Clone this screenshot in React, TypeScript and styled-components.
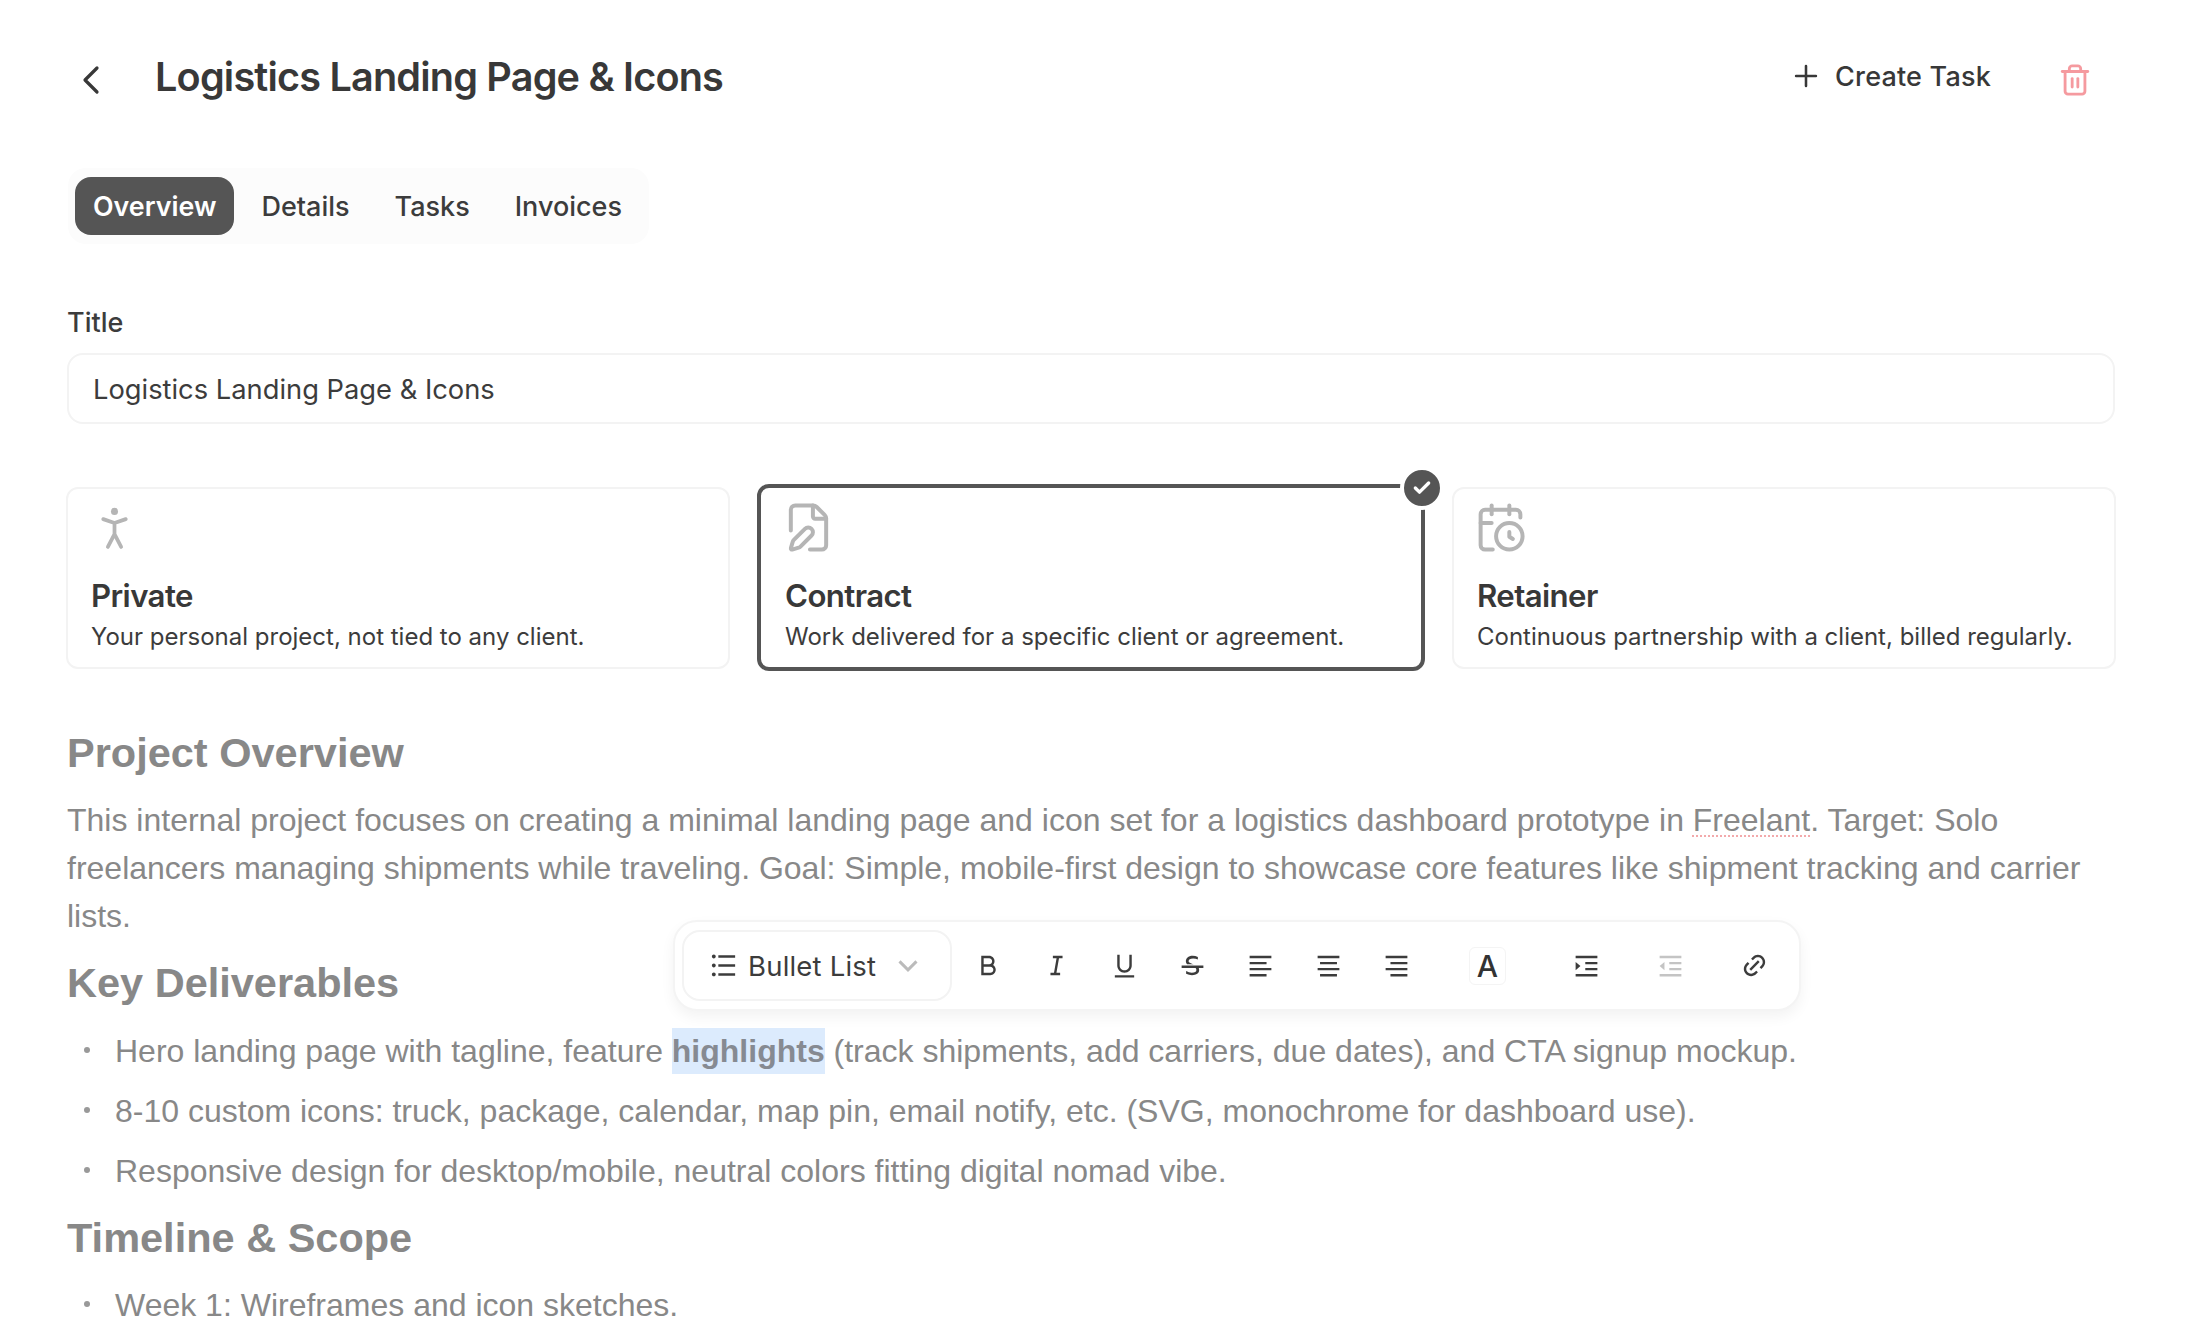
import React from "react";
import styled, { createGlobalStyle } from "styled-components";
import { ChevronLeft, Plus, Trash2, FilePen, CalendarClock, Check } from "lucide-react";
import {
  RiListUnordered, RiArrowDownSLine, RiBold, RiItalic, RiUnderline, RiStrikethrough,
  RiAlignLeft, RiAlignCenter, RiAlignRight, RiIndentIncrease, RiIndentDecrease, RiLinkM,
} from "react-icons/ri";

const Global = createGlobalStyle`
  html, body { margin: 0; padding: 0; background: #fff; height: 100%; overflow: hidden; }
  body { font-family: Inter, "Liberation Sans", sans-serif; color: #333; }
`;
const Page = styled.div`
  width: 2190px; height: 1318px; overflow: hidden; box-sizing: border-box; padding: 0 74px 0 66px; position: relative;
`;
const Header = styled.header`
  display: flex; align-items: center; height: 156px; padding: 0 24px 0 1px;
`;
const BackBtn = styled.span`display: flex; width: 88px; margin-top: 4px; color: #383838;`;
const PageTitle = styled.h1`
  margin: 0 0 2px; flex: 1; font-size: 39.6px; font-weight: 600; letter-spacing: -0.8px; color: #383838;
`;
const CreateBtn = styled.span`
  display: flex; align-items: center; gap: 12px; font-size: 27px; font-weight: 500; color: #383838; margin: 0 67px 4px 0; letter-spacing: 0.2px;
`;
const TrashBtn = styled.span`display: flex; margin-top: 4px; color: #f59a9f;`;
const Tabs = styled.nav`
  display: inline-flex; align-items: center; height: 76px; padding: 0 0 0 7px; margin: 12px 0 0 2px; background: #fcfcfc; border-radius: 18px;
`;
const Tab = styled.span<{ $active?: boolean }>`
  display: flex; align-items: center; height: 58px; padding: 0 18px; margin-right: 9px; border-radius: 16px;
  font-size: ${(p) => (p.$active ? "26.8px" : "27px")}; font-weight: ${(p) => (p.$active ? 600 : 500)};
  color: ${(p) => (p.$active ? "#fff" : "#3c3c3c")}; background: ${(p) => (p.$active ? "#555" : "transparent")};
`;
const Label = styled.div`font-size: 27px; font-weight: 500; color: #3c3c3c; margin: 62px 0 13px 1px; line-height: 34px;`;
const Input = styled.div`
  box-sizing: border-box; height: 71px; margin-left: 1px; width: 2048px; border: 2px solid #f3f3f3; border-radius: 16px; padding: 1px 24px 0; display: flex; align-items: center;
  font-size: 27.3px; color: #3c3c3c;
`;
const Cards = styled.div`display: flex; align-items: center; gap: 27px; margin-top: 60px; width: 2050px; height: 187px;`;
const Card = styled.div<{ $sel?: boolean }>`
  position: relative; box-sizing: border-box; flex: 0 0 ${(p) => (p.$sel ? 668 : 664)}px; height: ${(p) => (p.$sel ? 187 : 182)}px;
  padding: ${(p) => (p.$sel ? "14px 24px 0" : "13px 23px 0")}; border-radius: 12px;
  border: ${(p) => (p.$sel ? "4px solid #555" : "2px solid #f3f3f3")};
`;
const IconBox = styled.div`height: 53px; margin: -1px 0 22px -3px; color: #b5b5b5; display: flex;`;
const CardTitle = styled.div`font-size: 31.2px; font-weight: 600; color: #383838; letter-spacing: -0.6px; line-height: 40px;`;
const CardDesc = styled.div`font-size: 24px; color: #3c3c3c; line-height: 34px; margin-top: 4px; white-space: nowrap;`;
const Badge = styled.span`
  position: absolute; top: -22px; right: -23px; width: 36px; height: 36px; border-radius: 50%; background: #555; color: #fff; border: 4px solid #fff;
  display: flex; align-items: center; justify-content: center;
`;
const Doc = styled.article`
  margin: 0 0 0 1px; color: #888; font-family: "Liberation Sans", Arial, sans-serif;
`;
const H2 = styled.h2<{ $top: number }>`
  margin: ${(p) => p.$top}px 0 0; font-size: 41.5px; font-weight: 700; color: #888; line-height: 50px;
`;
const Para = styled.p`
  margin: 19px 0 0; font-size: 32px; line-height: 47.8px; width: 2050px; color: #888;
`;
const Squiggle = styled.span`text-decoration: underline dotted #f3a9ab; text-decoration-thickness: 2px; text-underline-offset: 4px;`;
const Ul = styled.ul<{ $top: number }>`margin: ${(p) => p.$top}px 0 0; padding: 0; list-style: none;`;
const Li = styled.li`
  position: relative; padding-left: 48px; font-size: 32px; line-height: 60px; color: #888;
  &::before { content: ""; position: absolute; left: 17px; top: 26px; width: 6px; height: 6px; border-radius: 50%; background: #999; }
`;
const Mark = styled.mark`background: #dcebfd; color: #868a92; font-weight: 700; padding: 5px 0;`;
const Toolbar = styled.div`
  position: absolute; left: 673px; top: 920px; box-sizing: border-box; width: 1128px; height: 91px; padding: 0 3px 0 7px; background: #fff; border: 2px solid #f4f4f4; border-radius: 24px;
  box-shadow: 0 6px 14px rgba(0,0,0,0.05); display: flex; align-items: center;
`;
const Select = styled.div`
  box-sizing: border-box; flex: 0 0 270px; height: 71px; margin-right: 2px; border: 2px solid #f3f3f3; border-radius: 18px; display: flex; align-items: center; padding-left: 24px;
  font-size: 27.5px; color: #3c3c3c; letter-spacing: 0.2px;
`;
const SelectText = styled.span`margin: 1px 14px 0 9px;`;
const Chevron = styled.span`display: flex; color: #bbb;`;
const Tool = styled.span<{ $w?: number; $faded?: boolean }>`
  display: flex; flex: 0 0 auto; align-items: center; justify-content: center; width: ${(p) => p.$w ?? 68}px; color: ${(p) => (p.$faded ? "#c4c4c4" : "#3c3c3c")};
`;
const FontA = styled.span`
  box-sizing: border-box; flex: 0 0 37px; height: 38px; margin: 0 38px 0 39px; border: 1px solid #f4f4f4; border-radius: 6px; padding-top: 1px; font-size: 30px; font-weight: 500; color: #333; display: flex; align-items: center; justify-content: center;
`;

const Person = () => (
  <svg width="53" height="53" viewBox="0 0 24 24" fill="none" stroke="currentColor" strokeWidth="1.7" strokeLinecap="round" strokeLinejoin="round">
    <circle cx="12" cy="4.7" r="1.6" fill="currentColor" stroke="none" />
    <path d="M6.9 8.2 12 10l5.1-1.8M12 10v5M12 15l-3 5.8M12 15l3 5.8" />
  </svg>
);

export default function App() {
  return (
    <Page>
      <Global />
      <Header>
        <BackBtn><ChevronLeft size={48} strokeWidth={1.6} /></BackBtn>
        <PageTitle>Logistics Landing Page &amp; Icons</PageTitle>
        <CreateBtn><Plus size={34} strokeWidth={1.8} />Create Task</CreateBtn>
        <TrashBtn><Trash2 size={34} strokeWidth={2} /></TrashBtn>
      </Header>
      <Tabs>
        <Tab $active>Overview</Tab>
        <Tab>Details</Tab>
        <Tab>Tasks</Tab>
        <Tab>Invoices</Tab>
      </Tabs>
      <Label>Title</Label>
      <Input>Logistics Landing Page &amp; Icons</Input>
      <Cards>
        <Card>
          <IconBox><Person /></IconBox>
          <CardTitle>Private</CardTitle>
          <CardDesc>Your personal project, not tied to any client.</CardDesc>
        </Card>
        <Card $sel>
          <Badge><Check size={20} strokeWidth={4} /></Badge>
          <IconBox><FilePen size={53} strokeWidth={1.8} /></IconBox>
          <CardTitle>Contract</CardTitle>
          <CardDesc>Work delivered for a specific client or agreement.</CardDesc>
        </Card>
        <Card>
          <IconBox><CalendarClock size={53} strokeWidth={1.8} /></IconBox>
          <CardTitle>Retainer</CardTitle>
          <CardDesc>Continuous partnership with a client, billed regularly.</CardDesc>
        </Card>
      </Cards>
      <Doc>
        <H2 $top={57}>Project Overview</H2>
        <Para>This internal project focuses on creating a minimal landing page and icon set for a logistics dashboard prototype in <Squiggle>Freelant</Squiggle>. Target: Solo freelancers managing shipments while traveling. Goal: Simple, mobile-first design to showcase core features like shipment tracking and carrier lists.</Para>
        <H2 $top={18}>Key Deliverables</H2>
        <Ul $top={13}>
          <Li>Hero landing page with tagline, feature <Mark>highlights</Mark> (track shipments, add carriers, due dates), and CTA signup mockup.</Li>
          <Li>8-10 custom icons: truck, package, calendar, map pin, email notify, etc. (SVG, monochrome for dashboard use).</Li>
          <Li>Responsive design for desktop/mobile, neutral colors fitting digital nomad vibe.</Li>
        </Ul>
        <H2 $top={12}>Timeline &amp; Scope</H2>
        <Ul $top={12}>
          <Li>Week 1: Wireframes and icon sketches.</Li>
        </Ul>
      </Doc>
      <Toolbar>
        <Select>
          <RiListUnordered size={31} />
          <SelectText>Bullet List</SelectText>
          <Chevron><RiArrowDownSLine size={36} /></Chevron>
        </Select>
        <Tool><RiBold size={29} /></Tool>
        <Tool><RiItalic size={29} /></Tool>
        <Tool><RiUnderline size={29} /></Tool>
        <Tool><RiStrikethrough size={29} /></Tool>
        <Tool><RiAlignLeft size={29} /></Tool>
        <Tool><RiAlignCenter size={29} /></Tool>
        <Tool><RiAlignRight size={29} /></Tool>
        <FontA>A</FontA>
        <Tool $w={84}><RiIndentIncrease size={29} /></Tool>
        <Tool $w={84} $faded><RiIndentDecrease size={29} /></Tool>
        <Tool $w={84}><RiLinkM size={29} /></Tool>
      </Toolbar>
    </Page>
  );
}
